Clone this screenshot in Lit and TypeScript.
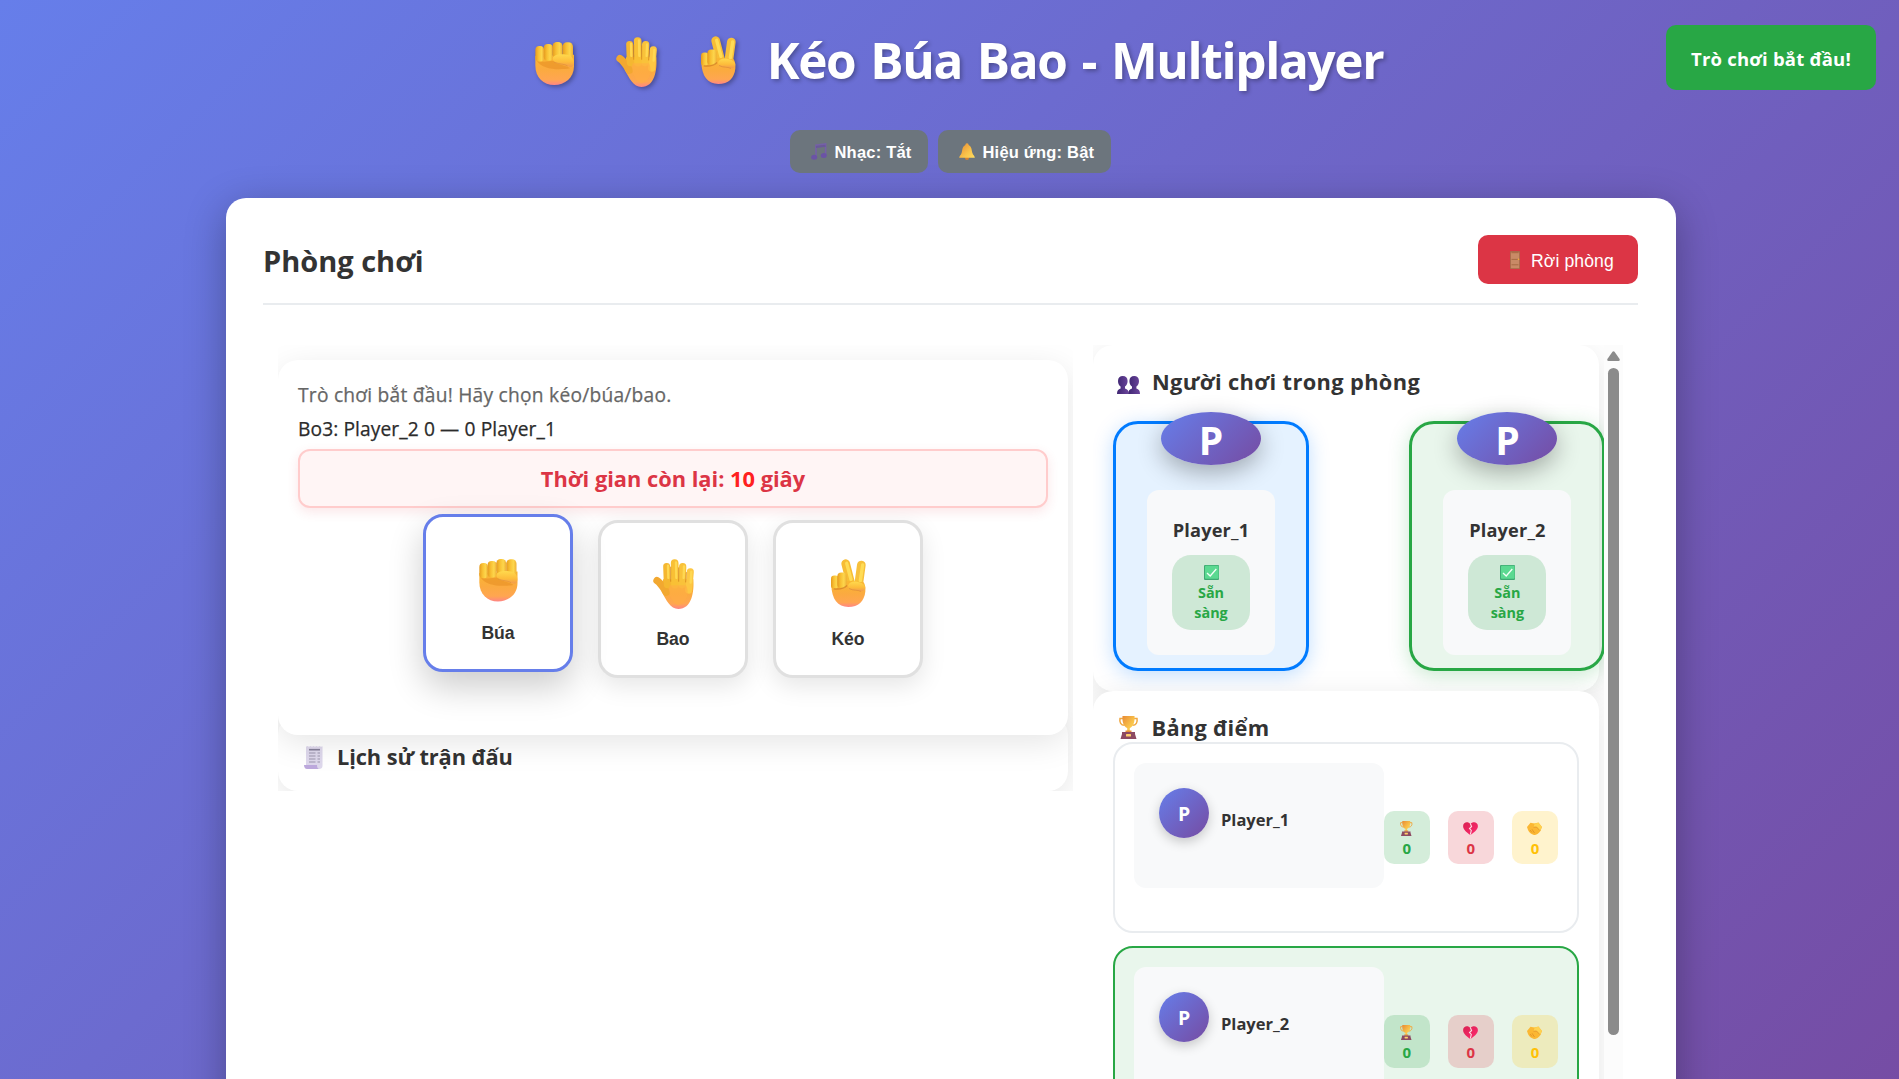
import { LitElement, html, svg, css } from "lit";
import { customElement, property } from "lit/decorators.js";

const gradients = svg`
  <defs>
    <linearGradient id="finger" x1="0" x2="1" y1="0" y2="0">
      <stop offset="0" stop-color="#e59a1f"/><stop offset=".35" stop-color="#f8bf33"/>
      <stop offset=".7" stop-color="#fdd64c"/><stop offset="1" stop-color="#eeb036"/>
    </linearGradient>
    <linearGradient id="palm" x1="0" x2="0" y1="0" y2="1">
      <stop offset="0" stop-color="#f9b730"/><stop offset=".5" stop-color="#fbaa40"/>
      <stop offset=".82" stop-color="#ffa651"/><stop offset="1" stop-color="#ff8585"/>
    </linearGradient>
    <linearGradient id="thumb" x1="0" x2="0" y1="0" y2="1">
      <stop offset="0" stop-color="#ffd94d"/><stop offset=".6" stop-color="#fdbc3b"/><stop offset="1" stop-color="#f29a4c"/>
    </linearGradient>
    <linearGradient id="gold" x1="0" x2="1" y1="0" y2="1">
      <stop offset="0" stop-color="#e88a35"/><stop offset=".6" stop-color="#f9c34a"/><stop offset="1" stop-color="#ffdd60"/>
    </linearGradient>
    <linearGradient id="heart" x1="0" x2="1" y1="0" y2="1">
      <stop offset="0" stop-color="#d92252"/><stop offset="1" stop-color="#ff2a70"/>
    </linearGradient>
    <linearGradient id="people" x1="0" x2="1" y1="0" y2="0">
      <stop offset="0" stop-color="#3f2672"/><stop offset="1" stop-color="#6b459c"/>
    </linearGradient>
  </defs>`;

const icons: Record<string, { box: string; art: unknown }> = {
  fist: {
    box: "0 0 116 128",
    art: svg`
      <path d="M1 42V70C1 106 25 128 57 128S116 106 116 72V38Z" fill="url(#palm)"/>
      <path d="M4 54C20 62 40 58 54 56C64 68 90 68 104 78C70 84 20 82 4 54Z" fill="#e58d22" opacity=".55"/>
      <rect x="1" y="12" width="26" height="46" rx="12" fill="url(#finger)"/>
      <rect x="26" y="6" width="27" height="50" rx="12" fill="url(#finger)"/>
      <rect x="52" y="0" width="30" height="48" rx="13" fill="url(#finger)"/>
      <rect x="82" y="1" width="31" height="52" rx="13" fill="url(#finger)"/>
      <path d="M53 48C55 38 72 35 90 37C108 39 118 50 115 66C113 76 104 76 94 70C84 65 58 66 53 52Z" fill="url(#thumb)"/>
      <path d="M58 60C72 67 86 64 96 71" fill="none" stroke="#dd8a3c" stroke-width="3" stroke-linecap="round" opacity=".6"/>`,
  },
  hand: {
    box: "0 0 123 148",
    art: svg`
      <path d="M30 60H121C124 98 116 148 76 148C52 148 40 122 26 98Z" fill="url(#palm)"/>
      <path d="M12 64C22 70 28 80 40 98" fill="none" stroke="#f2a830" stroke-width="22" stroke-linecap="round"/>
      <g fill="none" stroke-linecap="round">
        <path d="M41 22L43 76" stroke="#f5b731" stroke-width="21"/>
        <path d="M65 12L66 76" stroke="#f9c035" stroke-width="23"/>
        <path d="M89 23L87 76" stroke="#f9c23a" stroke-width="22"/>
        <path d="M112 38L107 92" stroke="#fdc743" stroke-width="21"/>
        <path d="M45 20L46 56M69 10L70 56M93 22L92 56M115 38L113 70" stroke="#ffd852" stroke-width="7"/>
        <path d="M53 24V66M77 26V66M100 40L98 68" stroke="#d88b1f" stroke-width="2.5"/>
      </g>
      <path d="M50 78H98C110 92 104 130 76 138C54 130 44 96 50 78Z" fill="#ffae45" opacity=".6"/>`,
  },
  peace: {
    box: "0 0 105 145",
    art: svg`
      <g fill="none" stroke-linecap="round">
        <path d="M44 14L62 84" stroke="#f7bd35" stroke-width="26"/>
        <path d="M91 18L82 84" stroke="#f7c03a" stroke-width="26"/>
        <path d="M47 13L60 62M95 18L88 66" stroke="#ffdc55" stroke-width="10"/>
      </g>
      <path d="M1 78L40 66L98 70C102 76 104 86 103 98C100 128 82 145 52 145C20 145 2 122 1 78Z" fill="url(#palm)"/>
      <rect x="0" y="50" width="23" height="40" rx="10" fill="url(#finger)"/>
      <rect x="19" y="41" width="28" height="47" rx="12" fill="url(#finger)"/>
      <path d="M8 90C24 92 40 88 48 80" fill="none" stroke="#c96f20" stroke-width="4" opacity=".6"/>
      <path d="M51 80C55 68 70 66 84 70C102 74 107 86 100 94C92 102 84 94 74 93C62 94 52 92 51 80Z" fill="url(#thumb)"/>
      <path d="M54 89C68 97 78 92 90 98" fill="none" stroke="#dd8a3c" stroke-width="3" opacity=".7"/>`,
  },
  music: {
    box: "0 0 16 17",
    art: svg`
      <path d="M5 13.5V2.2L14.6 1V12" fill="none" stroke="#7560a8" stroke-width="1.6"/>
      <path d="M5 4L14.6 2.8" stroke="#6a579b" stroke-width="2"/>
      <ellipse cx="3.2" cy="14.3" rx="3" ry="2.5" fill="#6b53a6"/>
      <ellipse cx="12.8" cy="12.6" rx="3" ry="2.5" fill="#6b53a6"/>`,
  },
  bell: {
    box: "0 0 16 17",
    art: svg`
      <circle cx="8" cy="15" r="2" fill="#d9822e"/>
      <path d="M8 .3C9.2 .3 9.6 1.3 9.6 2C12.8 3.4 12.6 7.500 13.4 10C14 12 16 13.3 15.8 14.8H.2C0 13.3 2 12 2.6 10C3.4 7.500 3.2 3.4 6.4 2C6.4 1.3 6.8 .3 8 .3Z" fill="url(#gold)"/>`,
  },
  door: {
    box: "0 0 10 18",
    art: svg`
      <rect width="10" height="18" rx=".6" fill="#a8694a"/>
      <rect x=".9" y="1.3" width="8.2" height="15.9" fill="#c98a66"/>
      <path d="M1.5 1.7H8.5M1.5 8.4H8.5M1.5 13.8H8.5" stroke="#a4663f" stroke-width=".9"/>
      <circle cx="8.5" cy="8.3" r=".8" fill="#f7ae3d"/>`,
  },
  scroll: {
    box: "0 0 19 23",
    art: svg`
      <path d="M2 .8L3.5 0L5 .8L6.5 0L8 .8L9.5 0L11 .8L12.5 0L14 .8L15.5 0L17 .8L18.5 .3V20C18.5 22 17 23 15 23H9L2 20Z" fill="#ded8ec"/>
      <path d="M0 19H13C13 21 13.5 23 15.5 23H3C1 23 0 21 0 19Z" fill="#bda9dd"/>
      <path d="M5 3.7H16" stroke="#857f99" stroke-width="1.6"/>
      <path d="M5 7H11.5M13.5 7H16M5 10H11.5M13.5 10H16M5 13H11.5M13.5 13H16M5 16H11.5M13.5 16H16" stroke="#9c96ad" stroke-width="1.2"/>`,
  },
  people: {
    box: "0 0 23 18",
    art: svg`
      <g fill="url(#people)">
        <path d="M1 5C1 1.8 3 0 5.8 0S10.6 1.8 10.6 5C10.6 8 9.3 9.6 8 10.6V12.4C10.5 13 11.8 14.5 11.8 18H0C0 14.5 1.2 13 3.6 12.4V10.6C2.2 9.6 1 8 1 5Z"/>
        <path d="M12.4 5C12.4 1.8 14.4 0 17.2 0S22 1.8 22 5C22 8 20.7 9.6 19.4 10.6V12.4C21.8 13 23 14.5 23 18H11.2C11.2 14.5 12.6 13 15 12.4V10.6C13.6 9.6 12.4 8 12.4 5Z"/>
      </g>`,
  },
  trophy: {
    box: "0 0 19 23",
    art: svg`
      <path d="M4 2.5H1C.2 6.5 2 9.3 5.5 9.3M15 2.5H18C18.8 6.5 17 9.3 13.5 9.3" fill="none" stroke="#f0a842" stroke-width="1.5"/>
      <path d="M3.5 0H15.5C16 6.5 14 11 10.8 12V16H8.2V12C5 11 3 6.5 3.5 0Z" fill="url(#gold)"/>
      <path d="M6.5 14.5H12.5V16.5H6.5Z" fill="#e88f38"/>
      <path d="M3 16H16V18L17.5 23H1.5L3 18Z" fill="#8d4a62"/>
      <rect x="7" y="18" width="5" height="2.6" rx=".5" fill="#ffcf6b"/>`,
  },
  heart: {
    box: "0 0 15 13",
    art: svg`
      <path d="M7.3 2C5.5 -.6 .3 -.5 .1 4C0 8 4.5 11 7.3 13C10.3 11 15 8 14.9 4C14.7 -.5 9.5 -.6 7.3 2Z" fill="url(#heart)"/>
      <path d="M7.3 1.5L8.6 4.5L6.5 6.5L8.3 8.5L7.3 12.6" fill="none" stroke="#fbdfe4" stroke-width="1.1"/>`,
  },
  shake: {
    box: "0 0 15 13",
    art: svg`
      <path d="M3.5 .8L7.5 1.6L11.5 .5L15 5L13.4 9C11.5 12 9 13.2 7 13C4.5 12.5 2 10.5 1 8L0 5Z" fill="#fbb733"/>
      <path d="M4 1L7.5 2L6.5 5.5L9.5 5L13 9L14.8 5L11.5 .7L8 1.6Z" fill="#ffd24f"/>
      <path d="M6.5 5.3L9.5 5L13 8.7M3 8L5 10.5M5 7.3L7.5 11" fill="none" stroke="#e08e27" stroke-width=".8"/>`,
  },
  check: {
    box: "0 0 15 15",
    art: svg`
      <rect width="15" height="15" rx="1" fill="#3fa873"/>
      <rect x="1" y=".7" width="13.6" height="13" rx=".8" fill="#5bd991"/>
      <path d="M3 8L6.2 11L12.3 4" fill="none" stroke="#f3fff7" stroke-width="1.3"/>`,
  },
};

@customElement("emoji-icon")
class EmojiIcon extends LitElement {
  @property() name = "fist";
  static styles = css`
    :host { display: block; flex: none; }
    svg { display: block; width: 100%; height: 100%; overflow: visible; }
  `;
  render() {
    const i = icons[this.name];
    return html`<svg viewBox=${i.box} preserveAspectRatio="none">${gradients}${i.art}</svg>`;
  }
}

@customElement("app-root")
class AppRoot extends LitElement {
  static styles = css`
    * { box-sizing: border-box; }
    :host {
      display: block; position: relative; width: 100%; height: 1079px; overflow: hidden;
      background: linear-gradient(135deg, #667eea 0%, #764ba2 100%) 0 0 / 100% 1180px no-repeat;
      font-family: "Open Sans", "Noto Sans", sans-serif; color: #333;
    }
    h1, h2, h3, p { margin: 0; font-weight: 700; white-space: nowrap; }
    button { border: 0; margin: 0; padding: 0; font-family: "Liberation Sans", Arial, sans-serif; white-space: nowrap; }

    .title { display: flex; justify-content: center; align-items: flex-start; padding: 20px 0 0 19px; height: 100px;
      font-size: 49.5px; line-height: 80px; color: #fff; text-shadow: 2px 2px 4px rgba(0,0,0,.3); }
    .title span { letter-spacing: -1.35px; word-spacing: 3.4px; }
    .title emoji-icon { filter: drop-shadow(2px 2px 2px rgba(0,0,0,.3)); }
    .t-fist { width: 39px; height: 43px; margin: 22px 42px 0 0; }
    .t-hand { width: 41px; height: 50px; margin: 17px 44px 0 0; }
    .t-peace { width: 35px; height: 48px; margin: 16px 31px 0 0; }

    .controls { display: flex; justify-content: center; gap: 10px; padding: 30px 0 0 1px; }
    .ctl { height: 43px; border-radius: 10px; background: #6c757d; color: #fff; font-size: 16.5px; font-weight: 700; display: flex; align-items: center; }
    .ctl span { padding-top: 1px; letter-spacing: .2px; }
    .ctl emoji-icon { width: 16px; height: 17px; margin: 0 8px 0 21px; }
    .ctl.music { width: 138px; }
    .ctl.fx { width: 173px; }

    .toast { position: absolute; left: 1666px; top: 25px; width: 210px; height: 65px; border-radius: 10px; background: #28a745;
      color: #fff; font-size: 18.5px; letter-spacing: .2px; font-weight: 700; line-height: 67px; text-align: center; white-space: nowrap; }

    .panel { margin: 25px 0 0 226px; width: 1450px; height: 1100px; border-radius: 20px; background: #fff;
      box-shadow: 0 10px 40px rgba(0,0,0,.3); padding: 0 38px 0 37px; }
    .head { height: 107px; padding-top: 37px; border-bottom: 2px solid #e9ecef; display: flex; justify-content: space-between; align-items: flex-start; }
    .head h2 { font-size: 29px; line-height: 52px; }
    .leave { width: 160px; height: 49px; border-radius: 10px; background: #dc3545; color: #fff; font-size: 17.6px; display: flex; align-items: center; }
    .leave span { padding-top: 3px; letter-spacing: .1px; }
    .leave emoji-icon { width: 10px; height: 18px; margin: 1px 11px 0 32px; }

    .body { display: grid; grid-template-columns: 795px 530px; column-gap: 20px; padding: 40px 0 0 15px; align-items: start; }
    .left { height: 446px; padding-top: 15px; overflow: hidden; }
    .game { position: relative; z-index: 1; width: 790px; height: 375px; padding: 18.4px 20px 0; border-radius: 20px; background: #fff; box-shadow: 0 8px 32px rgba(0,0,0,.1); }
    .game p { font-size: 19.2px; line-height: 34px; font-weight: 400; -webkit-text-stroke: .25px currentColor; }
    .status { color: #666; letter-spacing: .24px; }
    .bo { letter-spacing: .1px; color: #2b2b2b; }
    .timer { margin-top: 2.6px; height: 59px; border: 2px solid #ffcccc; border-radius: 12px; background: #fff5f5; color: #dc3545;
      font-size: 21.8px; line-height: 56px; font-weight: 700; text-align: center; box-shadow: 0 4px 12px rgba(220,53,69,.12); }
    .timer b { color: #ff2020; font-weight: inherit; }
    .choices { display: flex; justify-content: center; gap: 25px; margin-top: 12px; }
    .choice { width: 150px; height: 158px; border: 3px solid #e0e0e0; border-radius: 20px; background: #fff; color: #333; box-shadow: 0 8px 24px rgba(0,0,0,.1);
      display: flex; flex-direction: column; align-items: center; padding-top: 36px; font-size: 17.6px; line-height: 20px; font-weight: 700; }
    .choice.active { transform: translateY(-6px); border-color: #667eea; box-shadow: 0 15px 35px rgba(0,0,0,.2); }
    .glyph { height: 50px; margin-bottom: 20px; display: flex; align-items: flex-end; }
    .c-fist { width: 38.5px; height: 42.5px; margin-bottom: 1px; }
    .c-hand { width: 41px; height: 50px; }
    .c-peace { width: 35px; height: 48px; margin-bottom: 2px; }
    .history { width: 790px; height: 76px; margin-top: -20px; padding: 27px 0 0 26px; border-radius: 20px; background: #fff; box-shadow: 0 8px 32px rgba(0,0,0,.1); display: flex; align-items: flex-start; }
    h3 { font-size: 21.8px; line-height: 30px; }
    .history h3 { letter-spacing: -.1px; }
    .history emoji-icon { width: 19px; height: 23px; margin: 4px 14px 0 0; }

    .right { display: grid; grid-template-columns: 511px 19px; height: 900px; }
    .scrollarea { height: 900px; overflow: hidden; }
    .bar { background: #fcfcfc; display: flex; flex-direction: column; align-items: center; padding-top: 6px; }
    .bar svg { width: 13px; height: 10px; display: block; }
    .thumb { width: 11px; height: 667px; margin-top: 7px; border-radius: 6px; background: #8b8b8b; }
    .box { width: 506px; border-radius: 20px; background: #fff; box-shadow: 0 8px 32px rgba(0,0,0,.1); padding-left: 20px; }
    .players { height: 345.5px; padding-top: 21px; }
    .sec { display: flex; align-items: flex-start; height: 30px; }
    .players h3 { letter-spacing: .38px; padding-top: 1px; }
    .scores h3 { letter-spacing: .3px; padding-top: 4px; }
    .players .sec emoji-icon { width: 23px; height: 18px; margin: 10px 12px 0 4px; }
    .scores .sec emoji-icon { width: 19px; height: 23px; margin: 7px 13.5px 0 6px; }
    .plist { display: flex; gap: 100.4px; margin-top: 25px; }
    .player { flex: none; width: 196px; height: 250px; border: 3px solid #007bff; border-radius: 25px; background: rgba(0,123,255,.1); box-shadow: 0 4px 20px rgba(0,123,255,.25);
      display: flex; flex-direction: column; align-items: center; }
    .player.green { border-color: #28a745; background: rgba(40,167,69,.1); box-shadow: 0 4px 20px rgba(40,167,69,.25); }
    .oval { width: 100px; height: 53px; margin-top: -12px; border-radius: 50%; background: linear-gradient(135deg, #667eea, #764ba2); color: #fff;
      font-size: 39px; line-height: 55px; font-weight: 700; text-align: center; box-shadow: 0 8px 24px rgba(0,0,0,.3); }
    .info { width: 128px; height: 165px; margin-top: 25px; border-radius: 12px; background: #f8f9fa; display: flex; flex-direction: column; align-items: center; padding-top: 25px; }
    .pname { font-size: 18.2px; letter-spacing: .16px; line-height: 30px; font-weight: 700; height: 40px; }
    .ready { width: 78px; height: 75px; border-radius: 19px; background: rgba(40,167,69,.2); color: #28a745; font-size: 14.4px; line-height: 20px; font-weight: 700; text-align: center;
      display: flex; flex-direction: column; align-items: center; padding-top: 10px; }
    .ready emoji-icon { width: 15px; height: 15px; margin-bottom: 2.5px; }
    .scores { height: 700px; padding-top: 18px; position: relative; }
    .row { width: 466px; height: 191px; border: 2px solid #e9ecef; border-radius: 20px; padding: 19px 19px 0; margin-top: 3.5px; display: flex; align-items: flex-start; }
    .row.green { border-color: #28a745; background: rgba(40,167,69,.1); margin-top: 13px; }
    .who { width: 250px; height: 125px; border-radius: 12px; background: #f8f9fa; padding: 25px; display: flex; align-items: flex-start; }
    .disc { width: 50px; height: 50px; border-radius: 50%; background: linear-gradient(135deg, #667eea, #764ba2); color: #fff; font-size: 19.5px; font-weight: 700; line-height: 51px; text-align: center; box-shadow: 0 4px 12px rgba(0,0,0,.2); margin-right: 12px; }
    .sname { font-size: 16.5px; line-height: 30px; font-weight: 700; margin-top: 17px; }
    .stats { display: flex; justify-content: space-between; width: 174.5px; margin-top: 48px; }
    .stat { width: 46px; height: 53px; border-radius: 10px; font-size: 15px; line-height: 20px; font-weight: 700; display: flex; flex-direction: column; align-items: center; padding-top: 10px; }
    .stat emoji-icon { margin-bottom: 2px; height: 15px; width: 12.5px; }
    .stat.l emoji-icon, .stat.d emoji-icon { width: 15px; height: 13px; margin: 1px 0 3px; }
    .w { background: rgba(40,167,69,.2); color: #28a745; }
    .l { background: rgba(220,53,69,.2); color: #dc3545; }
    .d { background: rgba(255,193,7,.2); color: #ffc107; }
  `;

  private player(name: string, green: boolean) {
    return html`<div class="player ${green ? "green" : ""}">
      <div class="oval">P</div>
      <div class="info"><div class="pname">${name}</div>
        <div class="ready"><emoji-icon name="check"></emoji-icon><span>Sẵn</span><span>sàng</span></div>
      </div></div>`;
  }

  private score(name: string, green: boolean) {
    return html`<div class="row ${green ? "green" : ""}">
      <div class="who"><div class="disc">P</div><div class="sname">${name}</div></div>
      <div class="stats">
        <div class="stat w"><emoji-icon name="trophy"></emoji-icon>0</div>
        <div class="stat l"><emoji-icon name="heart"></emoji-icon>0</div>
        <div class="stat d"><emoji-icon name="shake"></emoji-icon>0</div>
      </div></div>`;
  }

  private choice(name: string, label: string, active = false) {
    return html`<button class="choice ${active ? "active" : ""}">
      <span class="glyph"><emoji-icon class="c-${name}" name=${name}></emoji-icon></span>${label}</button>`;
  }

  render() {
    return html`
      <h1 class="title">
        <emoji-icon class="t-fist" name="fist"></emoji-icon>
        <emoji-icon class="t-hand" name="hand"></emoji-icon>
        <emoji-icon class="t-peace" name="peace"></emoji-icon>
        <span>Kéo Búa Bao - Multiplayer</span>
      </h1>
      <div class="controls">
        <button class="ctl music"><emoji-icon name="music"></emoji-icon><span>Nhạc: Tắt</span></button>
        <button class="ctl fx"><emoji-icon name="bell"></emoji-icon><span>Hiệu ứng: Bật</span></button>
      </div>
      <div class="toast">Trò chơi bắt đầu!</div>
      <main class="panel">
        <div class="head">
          <h2>Phòng chơi</h2>
          <button class="leave"><emoji-icon name="door"></emoji-icon><span>Rời phòng</span></button>
        </div>
        <div class="body">
          <div class="left">
            <section class="game">
              <p class="status">Trò chơi bắt đầu! Hãy chọn kéo/búa/bao.</p>
              <p class="bo">Bo3: Player_2 0 — 0 Player_1</p>
              <div class="timer">Thời gian còn lại: <b>10</b> giây</div>
              <div class="choices">
                ${this.choice("fist", "Búa", true)}${this.choice("hand", "Bao")}${this.choice("peace", "Kéo")}
              </div>
            </section>
            <section class="history"><emoji-icon name="scroll"></emoji-icon><h3>Lịch sử trận đấu</h3></section>
          </div>
          <div class="right">
            <div class="scrollarea">
              <section class="box players">
                <div class="sec"><emoji-icon name="people"></emoji-icon><h3>Người chơi trong phòng</h3></div>
                <div class="plist">${this.player("Player_1", false)}${this.player("Player_2", true)}</div>
              </section>
              <section class="box scores">
                <div class="sec"><emoji-icon name="trophy"></emoji-icon><h3>Bảng điểm</h3></div>
                ${this.score("Player_1", false)}${this.score("Player_2", true)}
              </section>
            </div>
            <div class="bar"><svg viewBox="0 0 13 10"><path d="M5.5 .8Q6.5 -.4 7.5 .8L12.6 8Q13.2 10 11.5 10H1.5Q-.2 10 .4 8Z" fill="#8b8b8b"/></svg><div class="thumb"></div></div>
          </div>
        </div>
      </main>`;
  }
}
